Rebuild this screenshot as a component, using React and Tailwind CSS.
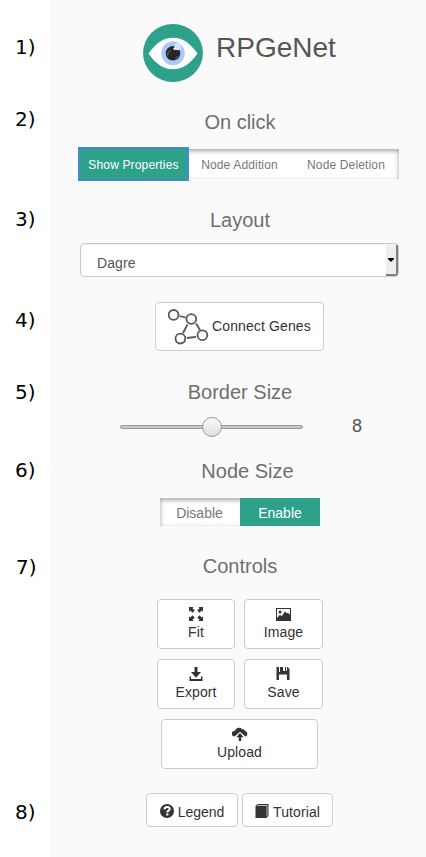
function Row({ n, height, labelTop, indent = "pl-[15px]", children }) {
  return (
    <section className={`flex ${height}`}>
      <div className={`w-[50px] shrink-0 font-['DejaVu_Sans',sans-serif] text-[20px] leading-[24px] text-black ${labelTop} ${indent}`}>
        {n})
      </div>
      <div className="flex w-[376px] flex-col bg-[#fafafa]">{children}</div>
    </section>
  );
}

function Title({ children, className }) {
  return <h2 className={`w-[380px] text-center text-[20px] leading-[22px] text-[#6f6f6f] ${className}`}>{children}</h2>;
}

const button = "rounded-[4px] border border-[#ccc] bg-white text-[14px] text-[#333]";

function Control({ icon, label, className = "" }) {
  return (
    <button className={`${button} flex h-[50px] flex-col items-center pt-[7px] leading-[20px] ${className}`}>
      {icon}
      <span className="mt-px tracking-[0.1px]">{label}</span>
    </button>
  );
}

function EyeLogo() {
  return (
    <svg width="60" height="58" viewBox="0 0 60 58">
      <ellipse cx="30" cy="29" rx="30" ry="29" fill="#2da189" />
      <path d="M5.500 29.500C13 19 20 13.700 30 13.700s17 5.300 24.500 15.800C47 40 40 45.200 30 45.200S13 40 5.500 29.500Z" fill="#fff" />
      <ellipse cx="30" cy="29.300" rx="11.700" ry="12" fill="#a9c9fb" />
      <circle cx="30" cy="29.300" r="7.300" fill="#262626" />
      <circle cx="35" cy="22.600" r="3.600" fill="#d3e2fd" />
      <circle cx="31.700" cy="24.700" r="1.300" fill="#eef4ff" />
      <path d="M24.800 31.500c-.3-2.500.7-4 2.600-5M32.500 34.500l2.500-2" stroke="#aaa" strokeWidth=".7" fill="none" />
    </svg>
  );
}

function GraphIcon() {
  return (
    <svg width="42" height="36" viewBox="0 0 42 36" fill="none" stroke="#555" strokeWidth="1.800">
      <path d="M11.500 7l6 1.500M19.500 15.500l-4.500 8.500M28 14.500l4 6.500M19 29l9-1.200" />
      <circle cx="5.600" cy="5.900" r="4.900" />
      <circle cx="23.300" cy="10" r="4.900" />
      <circle cx="12.400" cy="29.600" r="4.900" />
      <circle cx="34.400" cy="26.200" r="4.900" />
    </svg>
  );
}

function FitIcon() {
  return (
    <svg width="14" height="14" viewBox="0 0 14 14" fill="#333">
      <path d="M0 0h4.500L3.500 1.200 5.700 3.500 3.500 5.700 1.200 3.500 0 4.500ZM14 0v4.500l-1.200-1L10.500 5.700 8.300 3.500l2.200-2.300L9.500 0ZM0 14V9.500l1.200 1L3.500 8.300l2.200 2.200-2.200 2.300 1 1.200ZM14 14H9.500l1-1.200-2.200-2.300 2.200-2.200 2.300 2.200 1.200-1Z" />
    </svg>
  );
}

function ImageIcon() {
  return (
    <svg width="15" height="14" viewBox="0 0 15 14" fill="#333">
      <path fillRule="evenodd" d="M0 1h15v13H0ZM1 2v9l3-3.300 1.700 1.500L9 4.500l2 2 1-.7 2 2.200V2Z" />
      <circle cx="4" cy="5" r="1.500" />
    </svg>
  );
}

function ExportIcon() {
  return (
    <svg width="14" height="14" viewBox="0 0 14 14" fill="#333">
      <path d="M5.500 0h3v5H12L7 10.700 2 5h3.500ZM.5 9.500H2V12h10V9.500h1.500V14H.5Z" />
    </svg>
  );
}

function SaveIcon() {
  return (
    <svg className="mr-[2px]" width="14" height="14" viewBox="0 0 14 14" fill="#333">
      <path fillRule="evenodd" d="M.5 0H3v5h8V0h.5l2 2v11h-2.500V7.500H3V13H.5Z" />
      <path d="M4 0h3v5H4ZM9 0h1v4h1v1H7V4h2Z" />
    </svg>
  );
}

function UploadIcon() {
  return (
    <svg width="16" height="14" viewBox="0 0 16 14" fill="#333">
      <path d="M2.500 9.500A2.900 2.900 0 0 1 3 3.700C4 1.100 7.800-.4 10 2.300c1.700-.4 2.900.5 3 1.800 3 .5 2.900 4.900.4 5.400L8 4.800Z" />
      <path d="M8 6l3.700 4.300H9.200V14H6.800v-3.700H4.300Z" />
    </svg>
  );
}

function HelpIcon() {
  return (
    <svg width="14" height="14" viewBox="0 0 14 14">
      <circle cx="7" cy="7" r="7" fill="#333" />
      <path d="M4.400 5.400C4.500 2.100 9.800 2.200 9.700 5c0 1.700-2.400 1.600-2.400 3.500" fill="none" stroke="#fff" strokeWidth="2" />
      <path d="M6.200 9.500h2.200v2H6.200Z" fill="#fff" />
    </svg>
  );
}

function BookIcon() {
  return (
    <svg width="14" height="14" viewBox="0 0 14 14">
      <path d="M.5 2L2.500 0h11v12l-2 2H.5Z" fill="#333" />
      <path d="M2 1.500h10M12 1.500v11" fill="none" stroke="#ccc" strokeWidth=".9" />
    </svg>
  );
}

export default function App() {
  return (
    <main className="h-[857px] w-[426px] overflow-hidden bg-white font-['Liberation_Sans',Arial,sans-serif]">
      <Row n="1" height="h-[100px]" labelTop="pt-[35px]">
        <div className="flex pl-[93px] pt-[24px]">
          <EyeLogo />
          <h1 className="ml-[13px] mt-[8px] text-[28px] leading-[32px] text-[#555]">RPGeNet</h1>
        </div>
      </Row>
      <Row n="2" height="h-[100px]" labelTop="pt-[7px]">
        <Title className="mt-[11px]">On click</Title>
        <div className="ml-[30px] mt-[16px] flex h-[30px] w-[319px] bg-white text-center text-[12px] leading-[32px] tracking-[0.15px] text-[#777] shadow-[inset_0_2px_5px_rgba(0,0,0,0.36)]">
          <button className="w-[107px] bg-[#2da189] text-white outline-2 outline-[#4488d8]">Show Properties</button>
          <button className="w-[106px] pr-px">Node Addition</button>
          <button className="w-[106px]">Node Deletion</button>
        </div>
      </Row>
      <Row n="3" height="h-[90px]" labelTop="pt-[7px]">
        <Title className="mt-[9px]">Layout</Title>
        <div className="ml-[30px] mt-[12px] flex h-[34px] w-[319px] justify-between rounded-[4px] border border-[#ccc] bg-white pl-[16px] text-[14px] text-[#555] shadow-[inset_0_1px_1px_rgba(0,0,0,0.075)]">
          <span className="pt-[9px] leading-[20px] tracking-[0.1px]">Dagre</span>
          <span className="mt-[1px] flex h-[31px] w-[12px] items-center justify-center rounded-br-[3px] border-r-2 border-b-2 border-[#808080] bg-[#eee]">
            <svg width="6" height="4" viewBox="0 0 6 4"><path d="M0 0h6v1L3 4 0 1Z" fill="#000" /></svg>
          </span>
        </div>
      </Row>
      <Row n="4" height="h-[80px]" labelTop="pt-[18px]">
        <button className={`${button} ml-[105px] mt-[12px] flex h-[49px] w-[169px] items-center pl-[12px]`}>
          <GraphIcon />
          <span className="mb-[2px] ml-[2px] whitespace-nowrap leading-[20px] tracking-[0.12px]">Connect Genes</span>
        </button>
      </Row>
      <Row n="5" height="h-[80px]" labelTop="pt-[10px]">
        <Title className="mt-[11px]">Border Size</Title>
        <div className="mt-[13px] flex h-[22px] items-center pl-[70px]">
          <div className="flex h-[4px] w-[183px] items-center justify-center rounded-[2px] border border-[#999] bg-[#c8c8c8]">
            <span className="size-[20px] shrink-0 rounded-full border border-[#999] bg-gradient-to-b from-[#fafafa] to-[#dedede]" />
          </div>
          <span className="mb-[2px] ml-[49px] text-[18px] leading-[20px] text-[#555]">8</span>
        </div>
      </Row>
      <Row n="6" height="h-[95px]" labelTop="pt-[8px]">
        <Title className="mt-[10px] pl-[15px]">Node Size</Title>
        <div className="ml-[110px] mt-[16px] flex h-[28px] w-[160px] bg-white text-[14px] leading-[30px] text-[#777] shadow-[inset_0_2px_5px_rgba(0,0,0,0.36)]">
          <button className="w-[79px]">Disable</button>
          <button className="ml-px w-[80px] bg-[#2da189] text-white">Enable</button>
        </div>
      </Row>
      <Row n="7" height="h-[235px]" labelTop="pt-[10px]" indent="pl-[16px]">
        <Title className="mt-[10px]">Controls</Title>
        <div className="ml-[107px] mt-[22px] grid w-[166px] grid-cols-[78px_79px] gap-x-[9px] gap-y-[10px]">
          <Control icon={<FitIcon />} label="Fit" />
          <Control icon={<ImageIcon />} label="Image" />
          <Control icon={<ExportIcon />} label="Export" />
          <Control icon={<SaveIcon />} label="Save" />
          <Control icon={<UploadIcon />} label="Upload" className="col-span-2 ml-[4px] w-[157px]" />
        </div>
      </Row>
      <Row n="8" height="h-[77px]" labelTop="pt-[20px]">
        <div className="flex gap-[4px] pl-[96px] pt-[13px]">
          <button className={`${button} flex h-[34px] w-[92px] items-center justify-center gap-[4px] pt-[2px]`}><HelpIcon /><span className="pt-[2px]">Legend</span></button>
          <button className={`${button} flex h-[34px] w-[91px] items-center justify-center gap-[4px] pt-[2px]`}><BookIcon /><span className="pt-[2px] tracking-[0.1px]">Tutorial</span></button>
        </div>
      </Row>
    </main>
  );
}
